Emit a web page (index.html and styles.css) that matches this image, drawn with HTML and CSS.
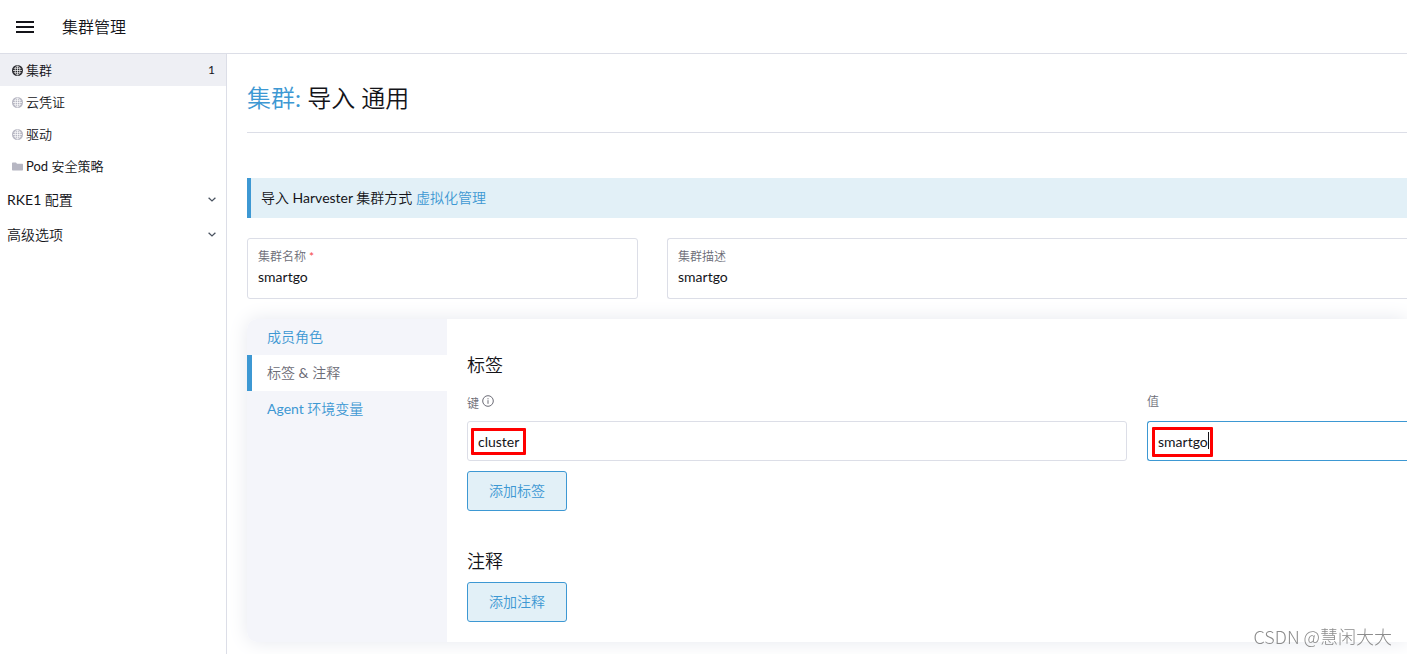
FILE: index.html
```html
<!DOCTYPE html>
<html lang="zh-CN">
<head>
<meta charset="utf-8">
<meta name="viewport" content="width=device-width, initial-scale=1">
<title>集群管理</title>
<link rel="stylesheet" href="styles.css">
</head>
<body>
<svg class="sprite" aria-hidden="true">
  <symbol id="globe" viewBox="0 0 11 11">
    <circle cx="5.500" cy="5.500" r="5.500" fill="currentColor"/>
    <g fill="none" stroke="#fff" stroke-width=".7"><ellipse cx="5.500" cy="5.500" rx="2.300" ry="4.600"/><path d="M5.500 1v9M1 5.500h9M1.800 3.300h7.400M1.800 7.700h7.400"/></g>
  </symbol>
  <symbol id="folder" viewBox="0 0 11 11"><path fill="currentColor" d="M0 2.200Q0 1.500.7 1.500H4l1 1.200h5.300q.7 0 .7.700v5.400q0 .7-.7.700H.7Q0 9.500 0 8.800z"/></symbol>
  <symbol id="chevron" viewBox="0 0 8 8"><path fill="none" stroke="currentColor" stroke-width="1.300" d="M.6 1.800 4 4.900l3.400-3.100"/></symbol>
</svg>
<header class="topbar">
  <button class="menu" type="button" aria-label="菜单"><svg viewBox="0 0 18 12" width="18" height="12"><path fill="currentColor" d="M0 0h18v2H0zM0 5h18v2H0zM0 10h18v2H0z"/></svg></button>
  <span class="product">集群管理</span>
</header>
<div class="shell">
  <nav class="sidenav">
    <a class="item active" href="#"><svg class="icon"><use href="#globe"/></svg><span>集群</span><span class="count">1</span></a>
    <a class="item" href="#"><svg class="icon"><use href="#globe"/></svg><span>云凭证</span></a>
    <a class="item" href="#"><svg class="icon"><use href="#globe"/></svg><span>驱动</span></a>
    <a class="item" href="#"><svg class="icon"><use href="#folder"/></svg><span>Pod 安全策略</span></a>
    <button class="group" type="button">RKE1 配置<svg class="chevron"><use href="#chevron"/></svg></button>
    <button class="group" type="button">高级选项<svg class="chevron"><use href="#chevron"/></svg></button>
  </nav>
  <main class="main">
    <h1 class="title"><a href="#">集群:</a> 导入 通用</h1>
    <p class="banner">导入 Harvester 集群方式 <a href="#">虚拟化管理</a></p>
    <div class="fields">
      <div class="field">
        <label for="name">集群名称<span class="required">*</span></label>
        <input id="name" type="text" value="smartgo">
      </div>
      <div class="field bleed">
        <label for="description">集群描述</label>
        <input id="description" type="text" value="smartgo">
      </div>
    </div>
    <section class="panel">
      <div class="tabs">
        <a class="tab" href="#">成员角色</a>
        <a class="tab current" href="#">标签 &amp; 注释</a>
        <a class="tab" href="#">Agent 环境变量</a>
      </div>
      <div class="content">
        <h3>标签</h3>
        <div class="pairs">
          <div class="pair">
            <label class="with-info" for="key">键 <svg class="info" viewBox="0 0 12 12"><circle cx="6" cy="6" r="5.300" fill="none" stroke="currentColor"/><path stroke="currentColor" d="M6 5.200v3.600M6 3.200v1.100"/></svg></label>
            <div class="control">
              <input id="key" type="text" value="cluster">
              <span class="mark mark-key"></span>
            </div>
          </div>
          <div class="pair">
            <label for="value">值</label>
            <div class="control">
              <input id="value" class="focused bleed" type="text" value="smartgo">
              <span class="mark mark-value"></span>
            </div>
          </div>
        </div>
        <button class="add" type="button">添加标签</button>
        <h3 class="second">注释</h3>
        <button class="add" type="button">添加注释</button>
      </div>
    </section>
  </main>
</div>
<div class="watermark">CSDN @慧闲大大</div>
</body>
</html>
```
FILE: styles.css
```css
* { box-sizing: border-box; }
body {
  margin: 0;
  min-height: 100vh;
  display: flex;
  flex-direction: column;
  overflow: hidden;
  background: #fff;
  color: #141419;
  font: 14px/20px Lato, "Noto Sans CJK SC DemiLight", "Noto Sans CJK SC", sans-serif;
}
a { color: #3d98d3; text-decoration: none; }
button, input { font: inherit; color: inherit; }
h1, h3, p { margin: 0; font-weight: 400; }
.sprite { position: absolute; width: 0; height: 0; }

.topbar {
  display: flex;
  align-items: center;
  gap: 28px;
  height: 54px;
  padding: 0 16px;
  border-bottom: 1px solid #dcdee7;
}
.menu { display: flex; padding: 0; border: 0; background: none; }
.product { font-size: 16px; line-height: 24px; }

.shell { flex: 1; display: flex; }
.sidenav {
  flex: none;
  width: 227px;
  border-right: 1px solid #dcdee7;
}
.item {
  display: flex;
  align-items: center;
  gap: 3px;
  height: 32px;
  padding: 0 11px 0 12px;
  color: #141419;
  font-size: 13px;
}
.item.active { background: #eeeff4; }
.icon { width: 11px; height: 11px; color: #b6b6c2; }
.active .icon { color: #26262c; }
.count { margin-left: auto; font-size: 12px; }
.group {
  display: flex;
  align-items: center;
  justify-content: space-between;
  width: 100%;
  height: 35px;
  padding: 0 10px 0 7px;
  border: 0;
  background: none;
}
.chevron { width: 8px; height: 8px; color: #4a5360; }

.main { flex: 1; min-width: 0; padding: 20px 0 12px 20px; }
.title {
  padding: 7px 0 18px;
  border-bottom: 1px solid #dcdee7;
  font-size: 24px;
  font-weight: 400;
  line-height: 33px;
}
.banner {
  margin: 45px 0 20px;
  padding: 10px;
  border-left: 4px solid #3d98d3;
  background: #e2f0f7;
}
.fields {
  display: grid;
  grid-template-columns: 391fr 740fr;
  gap: 29px;
}
.field {
  display: flex;
  flex-direction: column;
  height: 61px;
  padding: 8px 10px;
  border: 1px solid #dcdee7;
  border-radius: 3px;
}
.field input { width: 100%; height: 20px; padding: 0; border: 0; outline: 0; background: none; }
.field.bleed { border-right: 0; border-radius: 3px 0 0 3px; }
label { color: #6c6c76; font-size: 12px; line-height: 18px; }
.field label { line-height: 20px; }
.required { margin-left: 3px; color: #f64747; }

.panel {
  display: flex;
  margin-top: 20px;
  border-radius: 10px 0 0 10px;
  box-shadow: 0 0 20px #e6e8ee;
  background: #fff;
}
.tabs {
  flex: none;
  width: 200px;
  border-radius: 10px 0 0 10px;
  background: #f4f5fa;
}
.tab { display: block; padding: 8px 20px; }
.tab.current { padding-left: 15px; border-left: 5px solid #3d98d3; background: #fff; color: #6c6c76; }
.content { flex: 1; min-width: 0; padding: 32px 0 20px 20px; }
h3 { font-size: 18px; line-height: 28px; }
.pairs {
  display: grid;
  grid-template-columns: 660fr 260fr;
  gap: 20px;
  margin: 14px 0 10px;
}
.pair label { display: flex; align-items: center; gap: 3px; height: 18px; margin-bottom: 10px; }
.pair .with-info { align-items: flex-start; height: 20px; margin-bottom: 8px; padding-top: 2px; }
.info { width: 12px; height: 12px; }
.control { position: relative; }
.control input {
  display: block;
  width: 100%;
  height: 40px;
  padding: 0 10px;
  border: 1px solid #dcdee7;
  border-radius: 3px;
  outline: 0;
  background: #fff;
}
.control .focused { border-color: #3d98d3; }
.control .bleed { border-right: 0; border-radius: 3px 0 0 3px; }
.mark { position: absolute; border: 3px solid #f00; border-radius: 1px; }
.mark-key { left: 4px; top: 7px; width: 55px; height: 27px; }
.mark-value { left: 5px; top: 6px; width: 61px; height: 30px; }
.mark-value::after {
  content: "";
  position: absolute;
  right: 1px;
  top: 2px;
  width: 1px;
  height: 17px;
  background: #141419;
}
.add {
  display: block;
  height: 40px;
  padding: 0 21px;
  border: 1px solid #3d98d3;
  border-radius: 3px;
  background: #e2f0f7;
  color: #3d98d3;
}
.second { margin: 36px 0 7px; }
.watermark {
  position: fixed;
  right: 15px;
  bottom: 6px;
  color: #8c8c8c;
  font: 300 18px/24px "Noto Sans CJK SC", sans-serif;
}
```
